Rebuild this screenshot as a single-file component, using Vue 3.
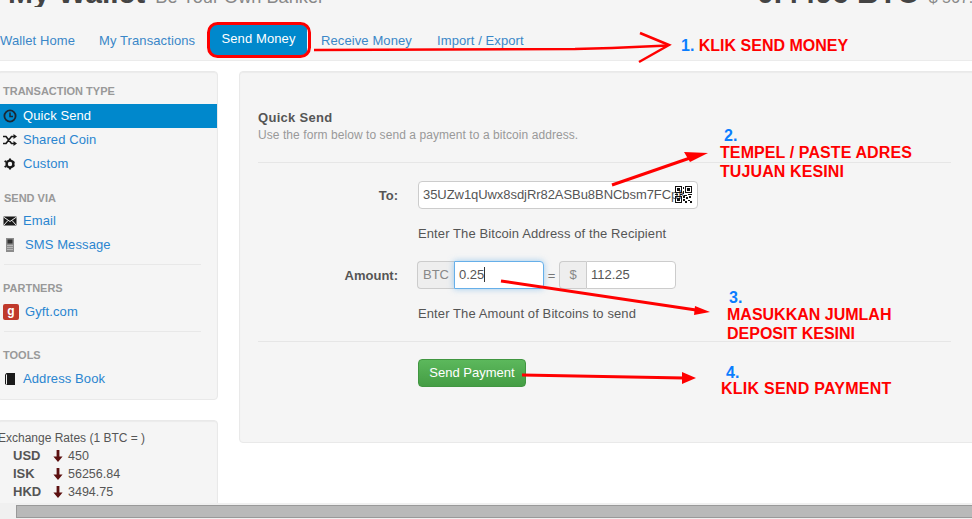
<template>
  <div class="page">
    <div class="viewport">
      <header class="top">
        <div class="brand-row">
          <div class="brand"><span class="brand-name">My Wallet</span><span class="brand-tag">Be Your Own Banker</span></div>
          <div class="balance"><span class="btc">0.4496 BTC</span><span class="usd">$ 567.25</span></div>
        </div>
        <nav class="nav">
          <a v-for="item in navItems" :key="item" class="nav-link" :class="{ active: item === 'Send Money' }">{{ item }}</a>
        </nav>
      </header>

      <div class="content">
        <aside class="side">
          <div class="well menu">
            <template v-for="(group, i) in groups" :key="group.title">
              <div v-if="i > 1" class="side-hr"></div>
              <div class="side-title" :class="'t' + i">{{ group.title }}</div>
              <a v-for="row in group.rows" :key="row.label" class="side-row" :class="{ on: row.on }">
                <span class="ico">
                  <svg v-if="row.icon === 'clock'" width="14" height="14" viewBox="0 0 14 14"><circle cx="7" cy="7" r="5.6" fill="none" stroke="#1c2733" stroke-width="1.8"/><path d="M7 3.6V7.6H10" fill="none" stroke="#1c2733" stroke-width="1.5"/></svg>
                  <svg v-else-if="row.icon === 'shuffle'" width="14" height="14" viewBox="0 0 14 14"><path d="M0 3.5H3L8.5 10.5H11M0 10.5H3L8.5 3.5H11" fill="none" stroke="#1a1a1a" stroke-width="1.7"/><path d="M10.5 1L14 3.5L10.5 6ZM10.5 8L14 10.5L10.5 13Z" fill="#1a1a1a"/></svg>
                  <svg v-else-if="row.icon === 'cog'" width="14" height="14" viewBox="0 0 14 14"><circle cx="7" cy="7" r="3.4" fill="none" stroke="#1a1a1a" stroke-width="2.4"/><path d="M7 1.4V12.6M1.6 4L12.4 10M1.6 10L12.4 4" stroke="#1a1a1a" stroke-width="2" stroke-dasharray="2 7.2 2"/></svg>
                  <svg v-else-if="row.icon === 'mail'" width="14" height="14" viewBox="0 0 14 14"><rect x="0.5" y="2.5" width="13" height="9" fill="#1a1a1a"/><path d="M0.5 3L7 7.5L13.5 3M0.5 11.5L5 6.5M13.5 11.5L9 6.5" fill="none" stroke="#eee" stroke-width="1"/></svg>
                  <svg v-else-if="row.icon === 'phone'" width="14" height="16" viewBox="0 0 14 16"><rect x="3" y="1" width="8" height="14" fill="#8c8c8c"/><rect x="4.5" y="2.5" width="5" height="4" fill="#333"/><path d="M4.5 8.5H9.5M4.5 10.5H9.5M4.5 12.5H9.5" stroke="#e2e2e2" stroke-dasharray="1 1"/></svg>
                  <span v-else-if="row.icon === 'gyft'" class="gyft">g</span>
                  <svg v-else width="14" height="14" viewBox="0 0 14 14"><path d="M2 2.5L3.5 1H12V13H3.5L2 12Z" fill="#1a1a1a"/><path d="M3.5 2.5V12.5" stroke="#eee"/></svg>
                </span>
                <span class="row-label" :class="{ shifted: row.icon === 'phone' || row.icon === 'gyft' }">{{ row.label }}</span>
              </a>
            </template>
          </div>

          <div class="well rates">
            <div class="rates-head">Exchange Rates (1 BTC = )</div>
            <div v-for="r in rates" :key="r.code" class="rate">
              <b>{{ r.code }}</b>
              <svg width="10" height="12" viewBox="0 0 10 12"><path d="M3.6 0H6.4V6.5H9.6L5 12L0.4 6.5H3.6Z" fill="#5c1010"/></svg>
              <span>{{ r.value }}</span>
            </div>
          </div>
        </aside>

        <main class="well panel">
          <h4 class="panel-title">Quick Send</h4>
          <p class="panel-sub">Use the form below to send a payment to a bitcoin address.</p>
          <div class="hr first"></div>

          <div class="form-row to-row">
            <label>To:</label>
            <div class="address">
              <span class="address-text">35UZw1qUwx8sdjRr82ASBu8BNCbsm7FCpK</span>
              <svg class="qr" width="17" height="17" viewBox="0 0 17 17" shape-rendering="crispEdges">
                <path d="M0 0H7V7H0ZM1 1V6H6V1ZM10 0H17V7H10ZM11 1V6H16V1ZM0 10H7V17H0ZM1 11V16H6V11Z" fill="#111" fill-rule="evenodd"/>
                <path d="M2 2H5V5H2ZM12 2H15V5H12ZM2 12H5V15H2ZM8 1H9V3H8ZM8 5H9V8H8ZM0 8H3V9H0ZM5 8H7V9H5ZM9 9H12V10H9ZM13 8H17V9H13ZM8 10H10V12H8ZM11 11H13V13H11ZM14 10H16V12H14ZM8 13H10V15H8ZM10 15H12V17H10ZM13 14H15V15H13ZM15 15H17V17H15Z" fill="#111"/>
              </svg>
            </div>
          </div>
          <div class="help help-to">Enter The Bitcoin Address of the Recipient</div>

          <div class="form-row amount-row">
            <label>Amount:</label>
            <div class="amount">
              <span class="addon btc-addon">BTC</span>
              <div class="field focus">0.25<i class="caret"></i></div>
              <span class="equals">=</span>
              <span class="addon usd-addon">$</span>
              <div class="field usd-field">112.25</div>
            </div>
          </div>
          <div class="help help-amount">Enter The Amount of Bitcoins to send</div>
          <div class="hr second"></div>

          <button class="send-btn">Send Payment</button>
        </main>
      </div>
    </div>

    <div class="hscroll"><div class="thumb"></div></div>

    <!-- tutorial markup painted over the screenshot -->
    <svg class="marks" width="972" height="519" viewBox="0 0 972 519">
      <rect x="208.5" y="23.5" width="101" height="33" rx="9" fill="none" stroke="#f00" stroke-width="3"/>
      <path d="M314 50L575 49L612 48L668 45.5" fill="none" stroke="#f00" stroke-width="2.5"/>
      <path d="M640 33L669 45L639 62" fill="none" stroke="#f00" stroke-width="2.5"/>
      <path d="M612 185L690 158" stroke="#f00" stroke-width="3"/>
      <path d="M708 153L684 152L690 162Z" fill="#f00"/>
      <path d="M501 281L696 310" stroke="#f00" stroke-width="3"/>
      <path d="M710 312L695 306L694 315Z" fill="#f00"/>
      <path d="M522 375L684 378" stroke="#f00" stroke-width="3"/>
      <path d="M696 378L682 372V384Z" fill="#f00"/>
    </svg>
    <div class="note n1"><span class="num">1.</span> KLIK SEND MONEY</div>
    <div class="note num-only n2">2.</div>
    <div class="note n2t">TEMPEL / PASTE ADRES<br>TUJUAN KESINI</div>
    <div class="note num-only n3">3.</div>
    <div class="note n3t">MASUKKAN JUMLAH<br>DEPOSIT KESINI</div>
    <div class="note num-only n4">4.</div>
    <div class="note n4t">KLIK SEND PAYMENT</div>
  </div>
</template>

<script setup>
const navItems = ['Wallet Home', 'My Transactions', 'Send Money', 'Receive Money', 'Import / Export']

const groups = [
  {
    title: 'TRANSACTION TYPE',
    rows: [
      { label: 'Quick Send', icon: 'clock', on: true },
      { label: 'Shared Coin', icon: 'shuffle' },
      { label: 'Custom', icon: 'cog' }
    ]
  },
  {
    title: 'SEND VIA',
    rows: [
      { label: 'Email', icon: 'mail' },
      { label: 'SMS Message', icon: 'phone' }
    ]
  },
  { title: 'PARTNERS', rows: [{ label: 'Gyft.com', icon: 'gyft' }] },
  { title: 'TOOLS', rows: [{ label: 'Address Book', icon: 'book' }] }
]

const rates = [
  { code: 'USD', value: '450' },
  { code: 'ISK', value: '56256.84' },
  { code: 'HKD', value: '3494.75' }
]
</script>

<style>
html, body { margin: 0; background: #fff; overflow: hidden; }
</style>

<style scoped>
.page {
  position: relative;
  width: 972px;
  height: 519px;
  overflow: hidden;
  display: flex;
  flex-direction: column;
  font-family: "Liberation Sans", Arial, sans-serif;
  font-size: 13px;
  color: #555;
}
.viewport { flex: 1; min-height: 0; overflow: hidden; }

.top {
  height: 61px;
  background: #f5f5f5;
  border-bottom: 1px solid #ebebeb;
  box-sizing: border-box;
}
.brand-row {
  height: 7px;
  overflow: hidden;
  display: flex;
  justify-content: space-between;
  align-items: flex-end;
  padding: 0 0 0 8px;
  white-space: nowrap;
}
.brand, .balance { margin-bottom: -3px; }
.brand-name { font-size: 30px; font-weight: bold; color: #444; }
.brand-tag { font-size: 18.2px; color: #888; margin-left: 10px; }
.btc { font-size: 30px; font-weight: bold; color: #444; }
.usd { font-size: 16px; color: #888; margin-left: 10px; }
.balance { width: 215px; overflow: hidden; }

.nav { display: flex; align-items: center; height: 30px; margin-top: 18px; letter-spacing: 0.1px; }
.nav-link { color: #3a87c8; white-space: nowrap; }
.nav-link:nth-child(1) { width: 99px; }
.nav-link:nth-child(2) { width: 111px; }
.nav-link:nth-child(4) { margin-left: 14px; width: 116px; }
.nav-link.active {
  width: 97px;
  height: 30px;
  line-height: 28px;
  text-align: center;
  background: #0088cc;
  color: #fff;
  border-radius: 4px;
}

.content { display: flex; align-items: flex-start; margin-top: 10px; }
.side { width: 218px; flex: none; }
.well {
  background: #f5f5f5;
  border: 1px solid #e9e9e9;
  border-radius: 4px;
  box-sizing: border-box;
  box-shadow: inset 0 1px 1px rgba(0, 0, 0, 0.04);
}
.menu { margin-left: -3px; width: 221px; height: 329px; padding-top: 12px; }
.side-title {
  font-size: 11px;
  line-height: 15px;
  font-weight: bold;
  color: #999;
  padding-left: 5px;
  margin-bottom: 5px;
}
.side-title.t1 { margin-top: 15px; margin-bottom: 3px; padding-left: 6px; }
.side-title.t2 { margin-top: 16px; margin-bottom: 4px; }
.side-title.t3 { margin-top: 16px; margin-bottom: 4px; }
.side-hr { height: 0; border-top: 1px solid #e8e8e8; margin: 7px 16px 0 6px; }
.side-row {
  display: flex;
  align-items: center;
  height: 24px;
  box-sizing: border-box;
  padding: 0 0 1px 5px;
  color: #2a85d0;
  font-size: 13px;
  letter-spacing: 0.1px;
}
.side-row.on { background: #0088cc; color: #fff; }
.ico { width: 20px; flex: none; display: flex; align-items: center; }
.row-label.shifted { margin-left: 2px; }
.gyft {
  width: 16px;
  height: 16px;
  background: #c0392b;
  border-radius: 2px;
  color: #fff;
  font-weight: bold;
  font-size: 12px;
  line-height: 14px;
  text-align: center;
}

.rates {
  margin-top: 20px;
  margin-left: -3px;
  width: 221px;
  height: 100px;
  padding-top: 8px;
  line-height: 18px;
  font-size: 12px;
}
.rate { display: flex; align-items: center; height: 18px; padding-left: 15px; font-size: 12.5px; }
.rate b { width: 40px; font-size: 13px; color: #555; }
.rate svg { margin-right: 5px; }

.panel {
  flex: 1;
  margin-left: 21px;
  margin-right: -20px;
  height: 372px;
  padding: 38px 40px 0 18px;
}
.panel-title { margin: 0; font-size: 13px; line-height: 16px; font-weight: bold; color: #555; letter-spacing: 0.3px; }
.panel-sub { margin: 1px 0 0; font-size: 12px; line-height: 16px; color: #999; letter-spacing: 0.07px; }
.hr { height: 0; border-top: 1px solid #e6e6e6; }
.hr.first { margin-top: 19px; }
.hr.second { margin-top: 19px; }

.form-row { display: flex; align-items: center; }
.form-row label { width: 140px; text-align: right; font-weight: bold; color: #555; margin-right: 20px; flex: none; }
.to-row { margin-top: 18px; }
.address {
  position: relative;
  width: 280px;
  height: 28px;
  box-sizing: border-box;
  background: #fff;
  border: 1px solid #ccc;
  border-radius: 4px;
  padding-left: 4px;
  line-height: 26px;
  white-space: nowrap;
  color: #555;
  letter-spacing: -0.06px;
}
.address-text { display: block; width: 261px; overflow: hidden; }
.qr { position: absolute; right: 5px; top: 4px; }
.help { margin-left: 160px; font-size: 13px; line-height: 16px; color: #555; letter-spacing: 0.1px; }
.help-to { margin-top: 17px; }
.amount-row { margin-top: 19px; }
.amount { display: flex; align-items: center; margin-left: -1px; height: 28px; }
.addon {
  height: 28px;
  line-height: 26px;
  box-sizing: border-box;
  background: #eee;
  border: 1px solid #ccc;
  color: #888;
  text-align: center;
  border-radius: 4px 0 0 4px;
  border-right: 0;
}
.btc-addon { width: 37px; }
.usd-addon { width: 27px; }
.field {
  height: 28px;
  line-height: 26px;
  box-sizing: border-box;
  background: #fff;
  border: 1px solid #ccc;
  border-radius: 0 4px 4px 0;
  padding-left: 4px;
  color: #555;
}
.field.focus {
  width: 90px;
  border-color: #66afe9;
  box-shadow: 0 0 6px rgba(102, 175, 233, 0.6);
}
.caret { display: inline-block; width: 1px; height: 15px; background: #333; vertical-align: -3px; }
.equals { width: 15px; text-align: center; color: #777; }
.usd-field { width: 90px; }
.help-amount { margin-top: 17px; }
.send-btn {
  display: block;
  margin: 17px 0 0 160px;
  width: 108px;
  height: 28px;
  padding: 0 0 2px;
  font: inherit;
  color: #fff;
  background: linear-gradient(#5cb85c, #449d44);
  border: 1px solid #419641;
  border-radius: 4px;
}

.hscroll {
  flex: none;
  height: 16px;
  background: #f0f0f0;
  box-sizing: border-box;
  padding: 2px 0 1px 16px;
}
.thumb { height: 13px; background: #b9b9b9; border-top: 1px solid #999; border-bottom: 1px solid #999; border-left: 1px solid #999; box-sizing: border-box; }

.marks { position: absolute; left: 0; top: 0; pointer-events: none; }
.note {
  position: absolute;
  font-size: 16px;
  line-height: 19px;
  font-weight: bold;
  color: #f00;
  white-space: nowrap;
}
.num, .num-only { color: #0a7dff; }
.n1 { left: 681px; top: 36px; }
.n2 { left: 724px; top: 126px; }
.n2t { left: 720px; top: 143px; letter-spacing: 0.1px; }
.n3 { left: 729px; top: 288px; }
.n3t { left: 727px; top: 305px; }
.n4 { left: 726px; top: 363px; }
.n4t { left: 721px; top: 379px; letter-spacing: 0.25px; }
</style>
